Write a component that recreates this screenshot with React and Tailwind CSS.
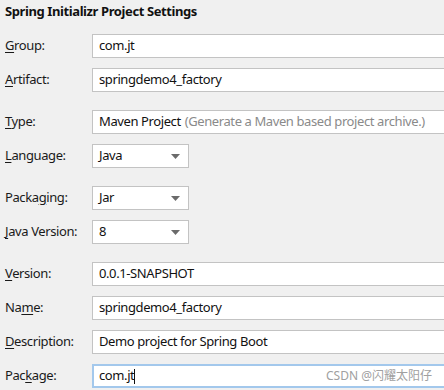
import React from "react";

const font = { fontFamily: '"Noto Sans", "Open Sans", "Noto Sans CJK SC", sans-serif' };

function Label({ text, u }) {
    // u = index of the mnemonic letter
    return (
        <div className="w-[92px] shrink-0 pl-[5px] text-[13px] text-[#1a1a1a]">
            {text.slice(0, u)}
            <span className="underline underline-offset-2">{text[u]}</span>
            {text.slice(u + 1)}
        </div>
    );
}

function TextBox({ children, focused }) {
    return (
        <div
            className={
                focused
                    ? "flex-1 h-6 -mr-2 flex items-center bg-white border-2 border-[#a3c8ec] pl-[5px] text-[13px] text-[#111] whitespace-nowrap overflow-hidden"
                    : "flex-1 h-6 -mr-2 flex items-center bg-white border border-[#c3c3c3] pl-[6px] text-[13px] text-[#111] whitespace-nowrap overflow-hidden"
            }
        >
            {children}
        </div>
    );
}

function Select({ value }) {
    return (
        <div className="w-[97px] h-6 flex items-center justify-between bg-white border border-[#c3c3c3] pl-[6px] pr-[8px] text-[13px] text-[#111]">
            <span>{value}</span>
            <svg width="9" height="5" viewBox="0 0 9 5">
                <path d="M0 0 L9 0 L4.5 5 Z" fill="#6b6b6b" />
            </svg>
        </div>
    );
}

export default function App() {
    return (
        <div className="w-[444px] h-[390px] bg-[#f0f0f0] overflow-hidden relative tracking-[-0.4px]" style={font}>
            <div className="h-[34px] pl-[5px] pt-[2px] text-[13px] font-bold text-[#111] leading-[18px]">
                Spring Initializr Project Settings
            </div>

            <div className="flex items-center h-6">
                <Label text="Group:" u={0} />
                <TextBox>com.jt</TextBox>
            </div>
            <div className="flex items-center h-6 mt-[10px]">
                <Label text="Artifact:" u={0} />
                <TextBox>springdemo4_factory</TextBox>
            </div>

            <div className="flex items-center h-6 mt-[18px]">
                <Label text="Type:" u={0} />
                <TextBox>
                    <span>Maven Project</span>
                    <span className="ml-1 text-[#8a8a8a]">(Generate a Maven based project archive.)</span>
                </TextBox>
            </div>
            <div className="flex items-center h-6 mt-[10px]">
                <Label text="Language:" u={0} />
                <Select value="Java" />
            </div>

            <div className="flex items-center h-6 mt-[18px]">
                <Label text="Packaging:" u={5} />
                <Select value="Jar" />
            </div>
            <div className="flex items-center h-6 mt-[10px]">
                <Label text="Java Version:" u={0} />
                <Select value="8" />
            </div>

            <div className="flex items-center h-6 mt-[18px]">
                <Label text="Version:" u={0} />
                <TextBox>0.0.1-SNAPSHOT</TextBox>
            </div>
            <div className="flex items-center h-6 mt-[10px]">
                <Label text="Name:" u={2} />
                <TextBox>springdemo4_factory</TextBox>
            </div>
            <div className="flex items-center h-6 mt-[10px]">
                <Label text="Description:" u={0} />
                <TextBox>Demo project for Spring Boot</TextBox>
            </div>
            <div className="flex items-center h-6 mt-[10px]">
                <Label text="Package:" u={3} />
                <TextBox focused>
                    <span>com.jt</span>
                    <span className="w-px h-[15px] bg-[#111]" />
                    <span className="ml-auto mr-[18px] text-[12px] text-[#a0a0a0] tracking-normal">CSDN @闪耀太阳仔</span>
                </TextBox>
            </div>
        </div>
    );
}
